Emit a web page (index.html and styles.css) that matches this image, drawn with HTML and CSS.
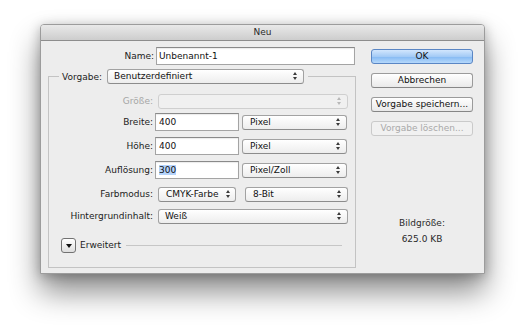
FILE: index.html
```html
<!DOCTYPE html>
<html lang="de">
<head>
  <meta charset="UTF-8" />
  <meta name="viewport" content="width=device-width, initial-scale=1.0" />
  <title>Neu</title>
  <link rel="stylesheet" href="styles.css">
</head>
<body>
  <div class="stage">
    <div class="window">
      <div class="titlebar">Neu</div>
      <div class="content">
        <div class="form">
          <div class="row name-row">
            <span class="lab">Name:</span>
            <div class="field name-field">Unbenannt-1</div>
          </div>

          <fieldset class="preset">
            <legend>
              <span class="legend-inner">
                <span class="legend-lab">Vorgabe:</span>
                <span class="popup preset-pop">Benutzerdefiniert</span>
              </span>
            </legend>

            <div class="row r-size">
              <span class="lab disabled">Größe:</span>
              <span class="popup full off"></span>
            </div>
            <div class="row r-width">
              <span class="lab">Breite:</span>
              <div class="field num">400</div>
              <span class="popup unit">Pixel</span>
            </div>
            <div class="row r-gap">
              <span class="lab">Höhe:</span>
              <div class="field num">400</div>
              <span class="popup unit">Pixel</span>
            </div>
            <div class="row r-gap">
              <span class="lab">Auflösung:</span>
              <div class="field num"><span class="sel">300</span></div>
              <span class="popup unit">Pixel/Zoll</span>
            </div>
            <div class="row r-gap">
              <span class="lab">Farbmodus:</span>
              <span class="popup mode">CMYK-Farbe</span>
              <span class="popup depth">8-Bit</span>
            </div>
            <div class="row r-bg">
              <span class="lab">Hintergrundinhalt:</span>
              <span class="popup full">Weiß</span>
            </div>

            <div class="row advanced">
              <span class="disclosure"></span>
              <span class="adv-lab">Erweitert</span>
              <span class="adv-line"></span>
            </div>
          </fieldset>
        </div>

        <div class="side">
          <button class="btn default">OK</button>
          <button class="btn">Abbrechen</button>
          <button class="btn">Vorgabe speichern...</button>
          <button class="btn" disabled>Vorgabe löschen...</button>
          <div class="size-info">
            <div>Bildgröße:</div>
            <div class="size-value">625.0 KB</div>
          </div>
        </div>
      </div>
    </div>
  </div>
</body>
</html>
```

FILE: styles.css
```css
html, body {
  margin: 0;
  height: 330px;
  overflow: hidden;
  background-color: #ffffff;
}
body {
  font-family: "DejaVu Sans", "Liberation Sans", sans-serif;
  font-size: 9px;
  color: #1c1c1c;
}
.stage {
  padding: 24px 0 0 40px;
}
.window {
  box-sizing: border-box;
  width: 445px;
  height: 250px;
  background-color: #ededed;
  border: 1px solid #9c9c9c;
  border-radius: 4px 4px 0 0;
  box-shadow: 0 18px 30px rgba(0, 0, 0, 0.45), 0 2px 12px rgba(0, 0, 0, 0.25);
}
.titlebar {
  height: 15px;
  line-height: 15px;
  text-align: center;
  color: #2a2a2a;
  border-bottom: 1px solid #8d8d8d;
  border-radius: 3px 3px 0 0;
  background: linear-gradient(#e9e9e9, #cdcdcd);
}
.content {
  display: flex;
  padding: 6px 11px 0 7px;
  gap: 15px;
}
.form {
  width: 308px;
}
.row {
  display: flex;
  align-items: center;
  height: 18px;
}
.lab {
  width: 106px;
  text-align: right;
  flex-shrink: 0;
}
.lab.disabled {
  color: #a6a6a6;
}
.field {
  box-sizing: border-box;
  height: 18px;
  line-height: 16px;
  background-color: #ffffff;
  border: 1px solid #a4a4a4;
  border-top-color: #8a8a8a;
  box-shadow: inset 0 1px 1px rgba(0, 0, 0, 0.08);
  padding-left: 2px;
  color: #111;
}
.name-field {
  width: 199px;
  margin-left: 2px;
}
.preset {
  margin: 4px 0 0;
  padding: 8px 0 13px;
  border: 1px solid #c3c3c3;
  min-width: 0;
}
.preset legend {
  padding: 0 4px 0 3px;
  margin-left: 10px;
}
.legend-inner {
  display: flex;
  align-items: center;
  height: 15px;
}
.legend-lab {
  margin-right: 5px;
}
.preset .lab {
  width: 104px;
}
.popup {
  position: relative;
  box-sizing: border-box;
  display: block;
  height: 15px;
  line-height: 13px;
  padding-left: 6px;
  border: 1px solid #a2a2a2;
  border-bottom-color: #8c8c8c;
  border-radius: 3px;
  background: linear-gradient(#ffffff, #ededed);
  color: #111;
  flex-shrink: 0;
}
.popup::before,
.popup::after {
  content: "";
  position: absolute;
  right: 6px;
  border-left: 2.5px solid transparent;
  border-right: 2.5px solid transparent;
}
.popup::before {
  top: 2px;
  border-bottom: 3px solid #3a3a3a;
}
.popup::after {
  top: 7px;
  border-top: 3px solid #3a3a3a;
}
.popup.off {
  border-color: #cfcfcf;
  background: #f0f0f0;
}
.popup.off::before {
  border-bottom-color: #b8b8b8;
}
.popup.off::after {
  border-top-color: #b8b8b8;
}
.preset-pop {
  width: 197px;
}
.full {
  width: 190px;
  margin-left: 5px;
}
.num {
  width: 84px;
  margin-left: 2px;
  padding-left: 3px;
}
.sel {
  background-color: #b4d3fb;
}
.unit {
  width: 105px;
  margin-left: 3px;
  padding-left: 7px;
}
.mode {
  width: 78px;
  margin-left: 5px;
  padding-left: 7px;
}
.mode::before,
.mode::after {
  right: 5px;
}
.depth {
  width: 103px;
  margin-left: 9px;
  padding-left: 7px;
}
.r-size {
  margin-top: 0;
}
.r-width {
  margin-top: 3px;
}
.r-gap {
  margin-top: 6px;
}
.r-bg {
  margin-top: 4px;
}
.advanced {
  margin-top: 11px;
  padding: 0 13px 0 12px;
}
.disclosure {
  position: relative;
  box-sizing: border-box;
  width: 15px;
  height: 15px;
  border: 1px solid #727272;
  border-radius: 3px;
  background: linear-gradient(#ffffff, #dedede);
  flex-shrink: 0;
}
.disclosure::after {
  content: "";
  position: absolute;
  left: 3.5px;
  top: 5px;
  border-left: 3px solid transparent;
  border-right: 3px solid transparent;
  border-top: 4px solid #111;
}
.adv-lab {
  margin-left: 4px;
}
.adv-line {
  flex: 1;
  height: 1px;
  margin-left: 5px;
  background-color: #c6c6c6;
}
.side {
  display: flex;
  flex-direction: column;
  width: 102px;
  padding-top: 2px;
  gap: 9px;
}
.btn {
  box-sizing: border-box;
  height: 15px;
  padding: 0;
  font-family: inherit;
  font-size: 9px;
  line-height: 13px;
  color: #111;
  border: 1px solid #9b9b9b;
  border-bottom-color: #868686;
  border-radius: 3px;
  background: linear-gradient(#ffffff, #e9e9e9);
}
.btn.default {
  border-color: #5a86c4;
  background: linear-gradient(#d2e6fd, #a4cbf6 50%, #84b9f3 51%, #b5d8fb);
}
.btn:disabled {
  color: #a9a9a9;
  border-color: #cacaca;
  background: #f1f1f1;
}
.size-info {
  margin-top: 73px;
  text-align: center;
  color: #2a2a2a;
}
.size-value {
  margin-top: 6px;
}
```
